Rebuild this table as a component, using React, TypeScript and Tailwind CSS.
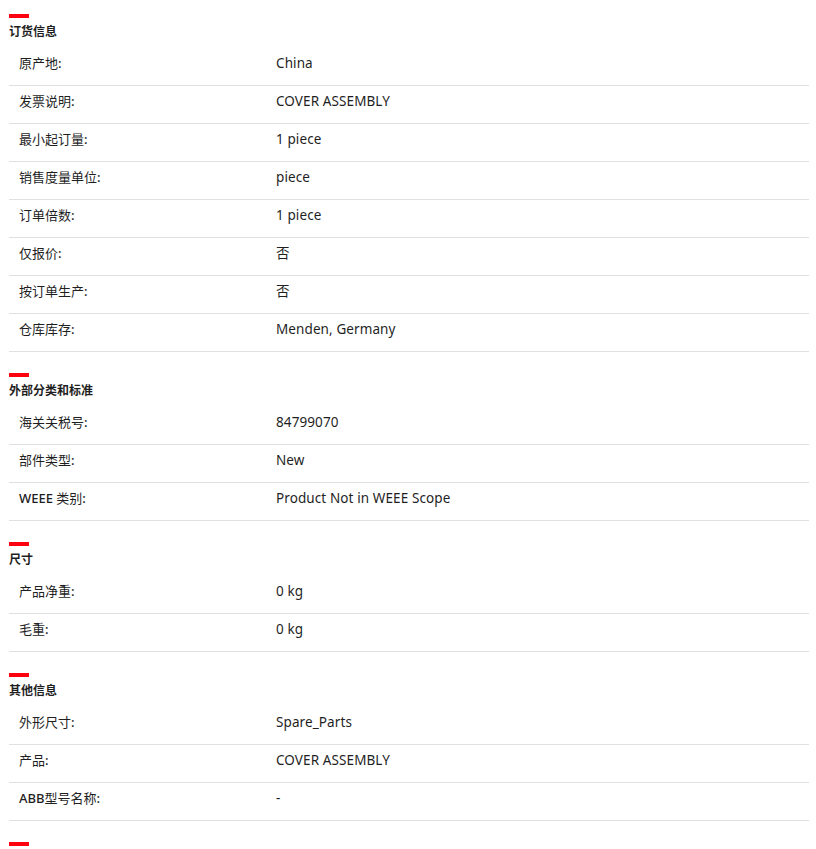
const SECTIONS: { title: string; rows: [string, string][] }[] = [
  {
    title: '订货信息',
    rows: [
      ['原产地:', 'China'],
      ['发票说明:', 'COVER ASSEMBLY'],
      ['最小起订量:', '1 piece'],
      ['销售度量单位:', 'piece'],
      ['订单倍数:', '1 piece'],
      ['仅报价:', '否'],
      ['按订单生产:', '否'],
      ['仓库库存:', 'Menden, Germany'],
    ],
  },
  {
    title: '外部分类和标准',
    rows: [
      ['海关关税号:', '84799070'],
      ['部件类型:', 'New'],
      ['WEEE 类别:', 'Product Not in WEEE Scope'],
    ],
  },
  {
    title: '尺寸',
    rows: [
      ['产品净重:', '0 kg'],
      ['毛重:', '0 kg'],
    ],
  },
  {
    title: '其他信息',
    rows: [
      ['外形尺寸:', 'Spare_Parts'],
      ['产品:', 'COVER ASSEMBLY'],
      ['ABB型号名称:', '-'],
    ],
  },
]

// latin letters in labels render a bit heavier than the CJK glyphs
function Label({ text }: { text: string }) {
  const parts = text.split(/([A-Za-z:]+)/).filter(Boolean)
  return (
    <>
      {parts.map((p, i) =>
        /[A-Za-z:]/.test(p) ? (
          <span key={i} className="font-medium">{p}</span>
        ) : (
          <span key={i}>{p}</span>
        )
      )}
    </>
  )
}

export default function App() {
  return (
    <div
      className="min-h-screen bg-white text-[#1f1f1f] pt-[14px]"
      style={{ fontFamily: '"Noto Sans", "Noto Sans CJK SC", sans-serif' }}
    >
      <div className="ml-[9px] w-[800px]">
        {SECTIONS.map(sec => (
          <section key={sec.title} className="mb-[21px]">
            <div className="w-5 h-1 bg-[#ff000f]" />
            <h3 className="mt-[5px] mb-[7px] text-[12px] leading-[18px] font-bold">{sec.title}</h3>
            {sec.rows.map(([label, value]) => (
              <div key={label} className="flex items-center border-b border-[#e0e0e0] pt-[5px] pb-[12px] leading-[20px]">
                <div className="w-[267px] pl-[10px] shrink-0 text-[13px]">
                  <Label text={label} />
                </div>
                <div className="text-[13.5px] tracking-[0.1px]">{value}</div>
              </div>
            ))}
          </section>
        ))}
        <div className="w-5 h-1 bg-[#ff000f]" />
      </div>
    </div>
  )
}
